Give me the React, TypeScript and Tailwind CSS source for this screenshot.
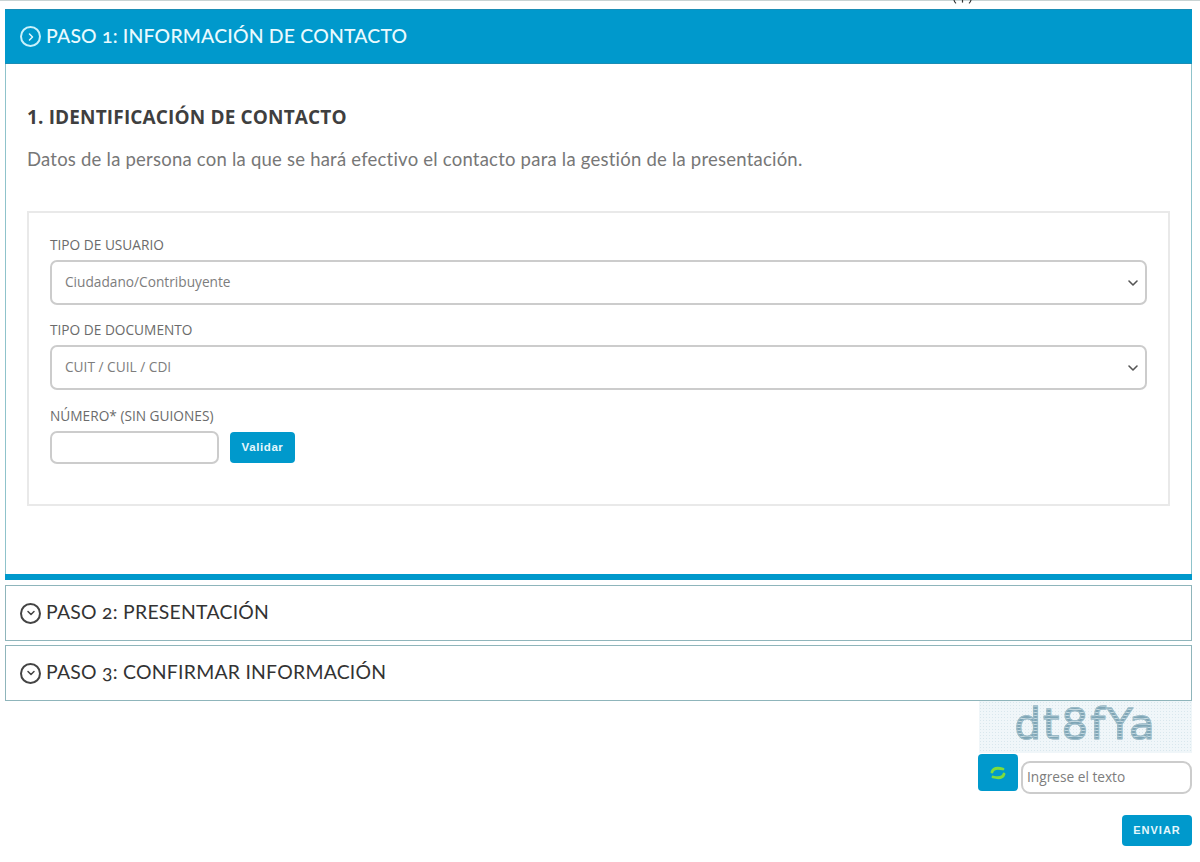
import React from 'react';
import { ChevronDown, ChevronRight } from 'lucide-react';

const raleway = "font-['Lato','Noto_Sans',sans-serif]";
const openSans = "font-['Open_Sans','Noto_Sans',sans-serif]";

const StepIcon: React.FC<{ open?: boolean }> = ({ open }) => (
  <span
    className={`flex h-[21px] w-[21px] shrink-0 items-center justify-center rounded-full border-2 ${
      open ? 'border-[#c9f1fb] text-[#e4f8fd]' : 'border-[#444444] text-[#444444]'
    }`}
  >
    {open ? <ChevronRight size={12} strokeWidth={3} /> : <ChevronDown size={12} strokeWidth={3} />}
  </span>
);

const ClosedStep: React.FC<{ label: string }> = ({ label }) => (
  <div className="flex h-[56px] items-center gap-[5px] border border-[#8fb5bb] bg-white pl-[14px]">
    <StepIcon />
    <span className={`${raleway} oldstyle-nums -mt-[2px] text-[19.4px] tracking-[0.25px] text-[#333333]`}>{label}</span>
  </div>
);

const SelectField: React.FC<{ label: string; value: string }> = ({ label, value }) => (
  <div className="flex flex-col">
    <label className="mb-[5px] h-[20px] text-[13.7px] leading-[20px] text-[#6b6b6b]">{label}</label>
    <div className="flex h-[45px] items-center justify-between rounded-[7px] border-2 border-[#cccccc] bg-white pl-[13px] pr-[4px]">
      <span className="text-[13.7px] text-[#7d7d7d]">{value}</span>
      <ChevronDown size={16} strokeWidth={2.4} className="text-[#555555]" />
    </div>
  </div>
);

const App: React.FC = () => {
  return (
    <div className={`${openSans} relative h-[862px] w-[1200px] overflow-hidden bg-white`}>
      <div className="h-[1px] bg-[#c9d3d3]" />
      {/* marks cut off by the top of the page */}
      <svg className="absolute left-[953px] top-0" width="20" height="4" viewBox="0 0 20 4" fill="none" stroke="#333333" strokeWidth="1.2">
        <path d="M1 0c.3 1.5 1 2.6 2 3.4" />
        <path d="M9.5 0v2.6" />
        <path d="M18 0c-.3 1.5-1 2.6-2 3.4" />
      </svg>
      <div className="ml-[5px] mt-[8px] w-[1187px]">
        {/* Paso 1 */}
        <div className="border-x border-[#8fc3cb]">
          <div className="-mx-px flex h-[55px] items-center gap-[5px] border-y border-[#1a8db5] bg-[#0099cc] pl-[15px]">
            <StepIcon open />
            <span className={`${raleway} oldstyle-nums -mt-[2px] text-[19.4px] font-medium tracking-[0.2px] text-[#e9fafe]`}>
              PASO 1: INFORMACIÓN DE CONTACTO
            </span>
          </div>
          <div className="h-[510px] px-[21px] pt-[39px]">
            <h2 className="h-[28px] text-[19px] font-bold leading-[28px] tracking-[0.15px] text-[#3f3f3f]">
              1. IDENTIFICACIÓN DE CONTACTO
            </h2>
            <p className={`${raleway} mt-[15px] h-[26px] text-[18.5px] leading-[26px] tracking-[0.22px] text-[#777777]`}>
              Datos de la persona con la que se hará efectivo el contacto para la gestión de la presentación.
            </p>
            <div className="mt-[39px] h-[295px] w-[1143px] border-2 border-[#e9e9e9] px-[21px] pt-[22px]">
              <div className="flex flex-col gap-[15px]">
                <SelectField label="TIPO DE USUARIO" value="Ciudadano/Contribuyente" />
                <SelectField label="TIPO DE DOCUMENTO" value="CUIT / CUIL / CDI" />
              </div>
              <div className="mt-[16px] flex flex-col">
                <label className="h-[20px] text-[13.7px] leading-[20px] text-[#6b6b6b]">NÚMERO* (SIN GUIONES)</label>
                <div className="mt-[5px] flex items-center gap-[11px]">
                  <div className="h-[33px] w-[169px] rounded-[7px] border-2 border-[#cccccc] bg-white" />
                  <button className="h-[31px] w-[65px] rounded-[4px] bg-[#0099cc] font-['Liberation_Sans',sans-serif] text-[11.5px] font-bold tracking-[0.6px] text-[#e4f7fc]">
                    Validar
                  </button>
                </div>
              </div>
            </div>
          </div>
          <div className="-mx-px h-[6px] bg-[#0099cc]" />
        </div>

        <div className="mt-[5px] flex flex-col gap-[4px]">
          <ClosedStep label="PASO 2: PRESENTACIÓN" />
          <ClosedStep label="PASO 3: CONFIRMAR INFORMACIÓN" />
        </div>

        {/* Captcha */}
        <div className="flex flex-col items-end">
          <div className="flex h-[52px] w-[213px] items-center justify-center bg-[#f0f6f9] bg-[radial-gradient(#d9e7ed_1px,transparent_1px)] bg-[length:3px_3px]">
            <span className="bg-[repeating-linear-gradient(180deg,#7fa6b6_0px,#7fa6b6_2px,#c3d8e0_2px,#c3d8e0_3px)] bg-clip-text pb-[4px] font-['DejaVu_Sans',sans-serif] text-[42px] font-normal leading-none tracking-[2px] text-transparent [-webkit-text-stroke:1px_#9dbcc9]">
              dt8fYa
            </span>
          </div>
          <div className="flex w-[214px] items-start">
            <button className="mt-px flex h-[37px] w-[40px] items-center justify-center rounded-[4px] bg-[#0099cc]">
              <svg width="18" height="16" viewBox="0 0 18 16" fill="none" stroke="#7ddc3c" strokeWidth="2.8" strokeLinecap="round" strokeLinejoin="round">
                <path d="M3 7C4 3.5 8 2.5 14 4" />
                <path d="M15 9C14 12.5 10 13.5 4 12" />
              </svg>
            </button>
            <div className="ml-[3px] mt-[8px] flex h-[33px] w-[171px] items-center rounded-[9px] border-2 border-[#cccccc] bg-white pl-[4px] text-[13.7px] text-[#7d7d7d]">
              Ingrese el texto
            </div>
          </div>
          <button className="mt-[21px] h-[31px] w-[70px] rounded-[4px] bg-[#0099cc] font-['Liberation_Sans',sans-serif] text-[11px] font-bold tracking-[1px] text-[#e4f7fc]">
            ENVIAR
          </button>
        </div>
      </div>
    </div>
  );
};

export default App;
